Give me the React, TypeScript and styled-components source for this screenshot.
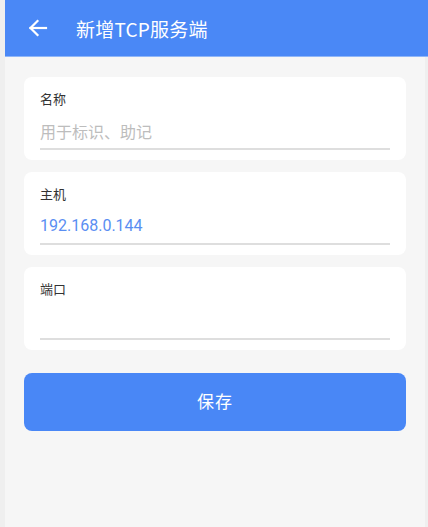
import React from 'react';
import styled, { createGlobalStyle } from 'styled-components';

const GlobalStyle = createGlobalStyle`
  html, body {
    margin: 0;
    padding: 0;
    background: #efefef;
  }
  body {
    font-family: 'Noto Sans CJK SC', Roboto, 'Noto Sans', sans-serif;
  }
`;

const Page = styled.div`
  display: flex;
  width: 428px;
  height: 527px;
  padding-left: 5px;
  box-sizing: border-box;
  background: #efefef;
  overflow: hidden;
`;

const Screen = styled.div`
  flex: 1;
  display: flex;
  flex-direction: column;
`;

const Header = styled.header`
  display: flex;
  align-items: center;
  height: 57px;
  background: #4a88f6;
  color: #fff;
  border-bottom: 1px solid #8fb6f8;
  box-sizing: border-box;
`;

const BackButton = styled.button`
  display: flex;
  align-items: center;
  justify-content: center;
  width: 64px;
  height: 56px;
  padding: 0 0 0 2px;
  border: none;
  background: transparent;
  color: #fff;
`;

const Title = styled.h1`
  margin: 0 0 0 7px;
  font-size: 19px;
  font-weight: 400;
  letter-spacing: 0.2px;
  line-height: 1;
`;

const Content = styled.main`
  flex: 1;
  display: flex;
  flex-direction: column;
  gap: 12px;
  margin-right: 3px;
  padding: 20px 19px 0;
  background: #f6f6f6;
`;

const Card = styled.section`
  display: flex;
  flex-direction: column;
  height: 83px;
  padding: 13px 16px 0;
  box-sizing: border-box;
  background: #fff;
  border-radius: 8px;
`;

const Label = styled.label`
  font-size: 13px;
  line-height: 18px;
  color: #333;
`;

const Field = styled.div<{ $tone: 'placeholder' | 'value' }>`
  height: 42px;
  padding-top: 12px;
  box-sizing: border-box;
  font-family: ${p => (p.$tone === 'value' ? "Roboto, 'Noto Sans CJK SC', sans-serif" : "'Noto Sans CJK SC', sans-serif")};
  font-size: 16px;
  line-height: 22px;
  color: ${p => (p.$tone === 'value' ? '#5a8ef2' : '#bdbdbd')};
  border-bottom: 2px solid #dedede;
`;

const SaveButton = styled.button`
  margin-top: 11px;
  height: 58px;
  border: none;
  border-radius: 8px;
  background: #4987f6;
  color: #fff;
  font-family: 'Noto Sans CJK SC', sans-serif;
  font-size: 17px;
  letter-spacing: 1px;
  padding: 0 0 3px;
`;

const fields = [
  { label: '名称', text: '用于标识、助记', tone: 'placeholder' as const },
  { label: '主机', text: '192.168.0.144', tone: 'value' as const },
  { label: '端口', text: '', tone: 'value' as const },
];

export default function App() {
  return (
    <>
      <GlobalStyle />
      <Page>
        <Screen>
          <Header>
            <BackButton aria-label="返回">
              <svg width="20" height="18" viewBox="0 0 20 18" fill="none" stroke="#fff" strokeWidth="2.2" strokeLinecap="square">
                <path d="M2.5 9H18" />
                <path d="M9.5 2L2.5 9l7 7" />
              </svg>
            </BackButton>
            <Title>新增TCP服务端</Title>
          </Header>
          <Content>
            {fields.map(f => (
              <Card key={f.label}>
                <Label>{f.label}</Label>
                <Field $tone={f.tone}>{f.text}</Field>
              </Card>
            ))}
            <SaveButton>保存</SaveButton>
          </Content>
        </Screen>
      </Page>
    </>
  );
}
